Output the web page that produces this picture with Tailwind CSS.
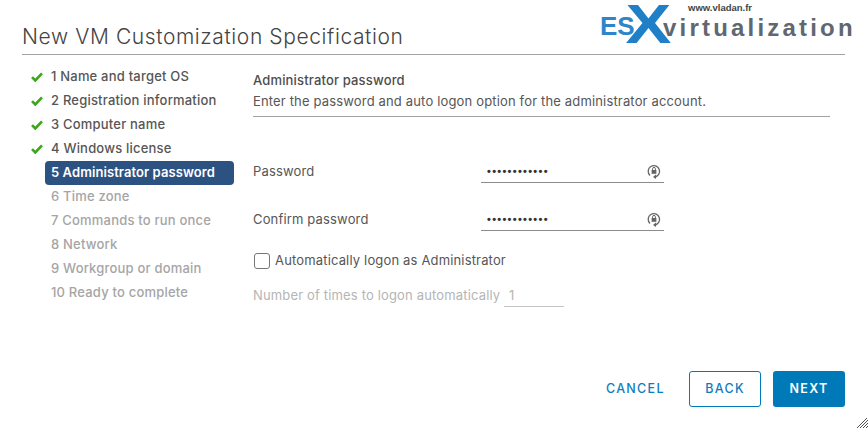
<!DOCTYPE html>
<html><head><meta charset="utf-8">
<script src="https://cdn.jsdelivr.net/npm/@tailwindcss/browser@4"></script>
</head>
<body class="m-0 bg-white">
<div class="relative w-[868px] h-[428px] overflow-hidden bg-white font-['Inter',sans-serif] text-[13px] tracking-[0.16px] text-[#565656]">
  <div class="px-[22px] h-[55px] pt-[21px]">
    <div class="border-b border-[#a3a3a3] h-[34px] w-[823px] text-[21px] leading-[31px] tracking-[0.6px] font-light text-[#444]">New VM Customization Specification</div>
  </div>
  <div class="flex">
    <nav class="w-[231px] pl-[31px] pt-[10px] flex flex-col font-medium text-[13px] tracking-[0.2px]">
      <div class="h-6 flex items-center"><svg class="w-[12px] h-[10px] mr-[8px]" viewBox="0 0 12 10"><path d="M1 5.2 4.3 8.5 11 1.3" fill="none" stroke="#3fa51f" stroke-width="2.6"/></svg><span>1 Name and target OS</span></div>
      <div class="h-6 flex items-center"><svg class="w-[12px] h-[10px] mr-[8px]" viewBox="0 0 12 10"><path d="M1 5.2 4.3 8.5 11 1.3" fill="none" stroke="#3fa51f" stroke-width="2.6"/></svg><span>2 Registration information</span></div>
      <div class="h-6 flex items-center"><svg class="w-[12px] h-[10px] mr-[8px]" viewBox="0 0 12 10"><path d="M1 5.2 4.3 8.5 11 1.3" fill="none" stroke="#3fa51f" stroke-width="2.6"/></svg><span>3 Computer name</span></div>
      <div class="h-6 flex items-center"><svg class="w-[12px] h-[10px] mr-[8px]" viewBox="0 0 12 10"><path d="M1 5.2 4.3 8.5 11 1.3" fill="none" stroke="#3fa51f" stroke-width="2.6"/></svg><span>4 Windows license</span></div>
      <div class="h-6 w-[189px] ml-[14px] pl-[6px] flex items-center rounded-[4px] bg-[#2c5282] text-white font-semibold tracking-[0.08px]">5 Administrator password</div>
      <div class="h-6 ml-[20px] flex items-center text-[#a5a5a5]">6 Time zone</div>
      <div class="h-6 ml-[20px] flex items-center text-[#a5a5a5]">7 Commands to run once</div>
      <div class="h-6 ml-[20px] flex items-center text-[#a5a5a5]">8 Network</div>
      <div class="h-6 ml-[20px] flex items-center text-[#a5a5a5]">9 Workgroup or domain</div>
      <div class="h-6 ml-[20px] flex items-center text-[#a5a5a5]">10 Ready to complete</div>
    </nav>
    <main class="ml-[-9px] pl-[31px] w-[608px] pt-[15px]">
      <div class="w-[577px] h-[47px] border-b border-[#a3a3a3]">
        <div class="h-[20px] leading-[20px] font-medium text-[#4d4d4d]">Administrator password</div>
        <div class="h-[22px] leading-[22px]">Enter the password and auto logon option for the administrator account.</div>
      </div>
      <div class="flex mt-[37px] h-[29px] w-[411px]">
        <div class="w-[228px] h-[29px] leading-[35px]">Password</div>
        <div class="flex-1 border-b border-[#8c8c8c] flex items-center justify-between pt-[6px] pl-[6px] pr-[3px]">
          <span class="text-[#333] text-[11px] tracking-[1.3px] font-bold font-['Liberation_Sans',sans-serif]">••••••••••••</span>
          <svg class="w-[14px] h-[15px]" viewBox="0 0 14 15"><path d="M3 11.5A5.7 5.7 0 1 1 7.5 13" fill="none" stroke="#666" stroke-width="1.3"/><path d="M9 10.6v4.4L6 13z" fill="#666"/><rect x="4.6" y="6" width="4.8" height="3.8" fill="#666"/><path d="M5.6 6V4.8a1.4 1.4 0 0 1 2.8 0V6" fill="none" stroke="#666"/></svg>
        </div>
      </div>
      <div class="flex mt-[19px] h-[29px] w-[411px]">
        <div class="w-[228px] h-[29px] leading-[35px]">Confirm password</div>
        <div class="flex-1 border-b border-[#8c8c8c] flex items-center justify-between pt-[6px] pl-[6px] pr-[3px]">
          <span class="text-[#333] text-[11px] tracking-[1.3px] font-bold font-['Liberation_Sans',sans-serif]">••••••••••••</span>
          <svg class="w-[14px] h-[15px]" viewBox="0 0 14 15"><path d="M3 11.5A5.7 5.7 0 1 1 7.5 13" fill="none" stroke="#666" stroke-width="1.3"/><path d="M9 10.6v4.4L6 13z" fill="#666"/><rect x="4.6" y="6" width="4.8" height="3.8" fill="#666"/><path d="M5.6 6V4.8a1.4 1.4 0 0 1 2.8 0V6" fill="none" stroke="#666"/></svg>
        </div>
      </div>
      <div class="flex items-center mt-[22px] h-[16px]">
        <div class="w-[16px] h-[16px] ml-[1px] border border-[#777] rounded-[3px] mr-[5px]"></div>
        <span>Automatically logon as Administrator</span>
      </div>
      <div class="flex mt-[14px] text-[#b5b5b5] h-[24px]">
        <span class="leading-[24px] w-[251px]">Number of times to logon automatically</span>
        <div class="w-[60px] h-[24px] pl-[5px] leading-[24px] border-b border-[#c4c4c4]">1</div>
      </div>
    </main>
  </div>
  <div class="absolute left-[606px] top-[371px] flex items-center h-[36px] text-[12.5px] font-medium tracking-[1.3px]">
    <div class="w-[83px] text-[#0f7dbb]">CANCEL</div>
    <div class="w-[72px] h-[36px] border border-[#0079b8] rounded-[3px] text-[#0f7dbb] flex items-center justify-center">BACK</div>
    <div class="w-[72px] h-[36px] ml-[12px] bg-[#0079b8] rounded-[3px] text-white font-semibold flex items-center justify-center">NEXT</div>
  </div>
  <div class="absolute left-[599px] top-0 w-[269px] h-[48px] tracking-normal font-['Liberation_Sans',sans-serif]">
    <div class="absolute left-[1px] top-[11px] text-[26px] leading-[30px] font-bold text-[#2e86c8]">ES</div>
    <div class="absolute left-[28px] top-0 w-[43px] text-center text-[55px] leading-[48px] font-bold text-[#1f7fc7] scale-x-125">X</div>
    <div class="absolute left-[64px] top-[13px] text-[24px] leading-[30px] font-bold text-[#5f6871] tracking-[3.2px]">virtualization</div>
    <div class="absolute left-[89px] top-[2px] text-[9.5px] leading-[12px] font-bold text-[#444]">www.vladan.fr</div>
  </div>
  <svg class="absolute right-0 bottom-0 w-[11px] h-[10px]" viewBox="0 0 11 10"><path d="M0 10 10 0M3 10 11 2M6 10 11 5M9 10 11 8" stroke="#555" stroke-width="1"/></svg>
</div>
</body></html>
